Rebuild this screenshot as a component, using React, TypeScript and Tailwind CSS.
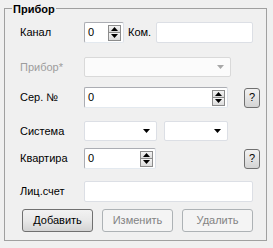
import React from 'react';

// маленькие контролы в стиле WinForms
const Arrow = ({ dir, gray }: { dir: 'up' | 'down'; gray?: boolean }) => (
  <svg width="7" height="4" viewBox="0 0 7 4" className="block">
    {dir === 'up' ? (
      <path d="M3.5 0 L7 4 L0 4 Z" fill={gray ? '#a3a3a3' : '#000'} />
    ) : (
      <path d="M0 0 L7 0 L3.5 4 Z" fill={gray ? '#a3a3a3' : '#000'} />
    )}
  </svg>
);

const SpinButtons = () => (
  <div className="flex flex-col w-[13px] h-[16px] border border-[#8c8c8c] bg-[#e6e6e6]">
    <div className="flex-1 flex items-center justify-center border-b border-[#8c8c8c] bg-gradient-to-b from-[#f4f4f4] to-[#dcdcdc]">
      <Arrow dir="up" />
    </div>
    <div className="flex-1 flex items-center justify-center bg-gradient-to-b from-[#f4f4f4] to-[#dcdcdc]">
      <Arrow dir="down" />
    </div>
  </div>
);

const Spinner = ({ width, value }: { width: string; value: string }) => (
  <div className={`${width} h-[21px] flex items-center bg-white border border-[#abadb3] border-r-[#dbdfe6] border-b-[#e3e9ef] rounded-[2px] pl-[3px] pr-[2px]`}>
    <span className="flex-1 leading-none">{value}</span>
    <SpinButtons />
  </div>
);

const TextBox = ({ width }: { width: string }) => (
  <div className={`${width} h-[21px] bg-white border border-[#dcdfe5] rounded-[2px]`} />
);

const Combo = ({ width, disabled }: { width: string; disabled?: boolean }) => (
  <div
    className={`${width} h-[20px] flex items-center justify-end pr-[6px] border rounded-[2px] ${
      disabled ? 'bg-[#fbfbfb] border-[#d9d9d9]' : 'bg-white border-[#dcdfe5]'
    }`}
  >
    <svg width="7" height="4" viewBox="0 0 7 4">
      <path d="M0 0 L7 0 L3.5 4 Z" fill={disabled ? '#a8a8a8' : '#000'} />
    </svg>
  </div>
);

const HelpBtn = () => (
  <div className="ml-auto mr-[6px] w-[16px] h-[20px] flex items-center justify-center border border-[#707070] rounded-[3px] bg-gradient-to-b from-[#f2f2f2] to-[#d4d4d4] text-[11px] leading-none">
    ?
  </div>
);

const Btn = ({ label, disabled }: { label: string; disabled?: boolean }) => (
  <div
    className={`w-[71px] h-[23px] flex items-center justify-center rounded-[3px] border ${
      disabled
        ? 'border-[#adb2b5] bg-[#f4f4f4] text-[#838383]'
        : 'border-[#707070] bg-gradient-to-b from-[#f2f2f2] via-[#e8e8e8] to-[#d3d3d3] text-black'
    }`}
  >
    {label}
  </div>
);

const Label = ({ text, gray }: { text: string; gray?: boolean }) => (
  <span className={`w-[64px] shrink-0 ${gray ? 'text-[#9d9d9d]' : 'text-black'}`}>{text}</span>
);

export default function App() {
  return (
    <div className="w-[273px] h-[248px] bg-[#f0f0f0] pt-[8px] pl-[4px] font-['Liberation_Sans',Arial,sans-serif] text-[11px] text-black">
      <div className="relative w-[263px] h-[233px] border border-[#a0a0a0] pl-[15px] pt-[13px]">
        <span className="absolute left-[7px] -top-[8px] px-[1px] bg-[#f0f0f0] font-bold text-[11px]">Прибор</span>

        <div className="flex items-center h-[21px]">
          <Label text="Канал" />
          <Spinner width="w-[40px]" value="0" />
          <span className="ml-[4px] w-[28px]">Ком.</span>
          <TextBox width="w-[97px]" />
        </div>

        <div className="flex items-center h-[20px] mt-[14px]">
          <Label text="Прибор*" gray />
          <Combo width="w-[147px]" disabled />
        </div>

        <div className="flex items-center h-[21px] mt-[10px]">
          <Label text="Сер. №" />
          <Spinner width="w-[144px]" value="0" />
          <HelpBtn />
        </div>

        <div className="flex items-center h-[20px] mt-[13px]">
          <Label text="Система" />
          <Combo width="w-[73px]" />
          <div className="ml-[7px]">
            <Combo width="w-[64px]" />
          </div>
        </div>

        <div className="flex items-center h-[21px] mt-[7px]">
          <Label text="Квартира" />
          <Spinner width="w-[72px]" value="0" />
          <HelpBtn />
        </div>

        <div className="flex items-center h-[21px] mt-[12px]">
          <Label text="Лиц.счет" />
          <TextBox width="w-[169px]" />
        </div>

        <div className="flex gap-[9px] mt-[7px] pl-[2px]">
          <Btn label="Добавить" />
          <Btn label="Изменить" disabled />
          <Btn label="Удалить" disabled />
        </div>
      </div>
    </div>
  );
}
